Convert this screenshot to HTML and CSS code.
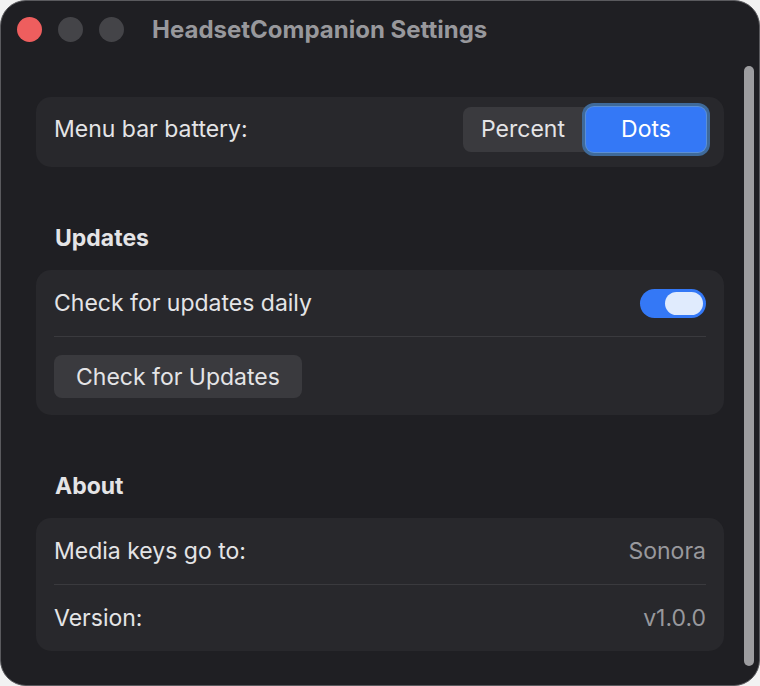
FILE: index.html
```html
<!DOCTYPE html>
<html lang="en">
<head>
    <meta charset="UTF-8">
    <meta name="viewport" content="width=device-width, initial-scale=1.0">
    <title>HeadsetCompanion Settings</title>
    <link rel="stylesheet" href="styles.css">
</head>
<body>
    <div class="window">
        <div class="titlebar">
            <span class="light light-close"></span>
            <span class="light"></span>
            <span class="light"></span>
            <span class="title">HeadsetCompanion Settings</span>
        </div>
        <div class="content">
            <div class="main">
                <div class="card">
                    <div class="row row-tall">
                        <span class="label">Menu bar battery:</span>
                        <div class="segmented">
                            <span class="segment">Percent</span>
                            <span class="segment selected">Dots</span>
                        </div>
                    </div>
                </div>

                <h2 class="section">Updates</h2>
                <div class="card">
                    <div class="row">
                        <span class="label">Check for updates daily</span>
                        <span class="toggle"><span class="knob"></span></span>
                    </div>
                    <div class="divider"></div>
                    <div class="row">
                        <button class="button">Check for Updates</button>
                    </div>
                </div>

                <h2 class="section">About</h2>
                <div class="card">
                    <div class="row">
                        <span class="label">Media keys go to:</span>
                        <span class="value">Sonora</span>
                    </div>
                    <div class="divider"></div>
                    <div class="row">
                        <span class="label">Version:</span>
                        <span class="value">v1.0.0</span>
                    </div>
                </div>
            </div>
            <div class="scrollbar"><div class="thumb"></div></div>
        </div>
    </div>
</body>
</html>
```

FILE: styles.css
```css
html, body {
    margin: 0;
    height: 100%;
}
body {
    background: #f2f2f2;
    font-family: Inter, "Noto Sans", sans-serif;
}
.window {
    box-sizing: border-box;
    width: 760px;
    height: 686px;
    background: #1f1f23;
    border: 1px solid #5a5a5e;
    border-radius: 26px;
    display: flex;
    flex-direction: column;
    overflow: hidden;
}
.titlebar {
    display: flex;
    align-items: center;
    height: 56px;
    padding-left: 16px;
    flex-shrink: 0;
}
.light {
    width: 25px;
    height: 25px;
    border-radius: 50%;
    background: #444448;
    margin-right: 16px;
}
.light-close {
    background: #ee5e5e;
}
.title {
    margin-left: 12px;
    font-size: 24px;
    font-weight: 700;
    color: #98989c;
}
.content {
    flex: 1;
    display: flex;
}
.main {
    flex: 1;
    padding: 40px 0 0 35px;
}
.card {
    background: #28282c;
    border-radius: 15px;
    padding: 0 18px;
}
.row {
    display: flex;
    align-items: center;
    justify-content: space-between;
    min-height: 66px;
}
.row-tall {
    box-sizing: border-box;
    min-height: 70px;
    padding-bottom: 6px;
}
.label {
    font-size: 23px;
    color: #e4e4e6;
}
.value {
    font-size: 23px;
    color: #98989d;
}
.divider {
    height: 1px;
    background: #3a3a3e;
}
.section {
    margin: 57px 0 18px 19px;
    height: 28px;
    line-height: 28px;
    font-size: 23px;
    font-weight: 700;
    color: #e4e4e6;
}
.segmented {
    display: flex;
    background: #3a3a3e;
    border-radius: 8px;
}
.segment {
    width: 120px;
    height: 45px;
    display: flex;
    align-items: center;
    justify-content: center;
    font-size: 23px;
    color: #e4e4e6;
    border-radius: 8px;
}
.segment.selected {
    margin-left: 3px;
    background: #3478f6;
    color: #ffffff;
    box-shadow: 0 0 0 1px #5b8fd6, 0 0 0 4px #3f6a9a;
}
.toggle {
    width: 66px;
    height: 29px;
    border-radius: 15px;
    background: #3478f6;
    display: flex;
    align-items: center;
    justify-content: flex-end;
    padding-right: 3px;
    box-sizing: border-box;
}
.knob {
    width: 38px;
    height: 23px;
    border-radius: 12px;
    background: #e0ebfd;
}
.button {
    margin: 18px 0 17px;
    height: 43px;
    padding: 0 22px;
    background: #3a3a3e;
    border: none;
    border-radius: 8px;
    font-family: Inter, "Noto Sans", sans-serif;
    font-size: 23px;
    color: #e4e4e6;
}
.scrollbar {
    width: 35px;
    padding-top: 9px;
    padding-bottom: 19px;
    box-sizing: border-box;
    display: flex;
}
.thumb {
    width: 10px;
    margin-left: 20px;
    border-radius: 5px;
    background: #9d9da0;
}
```
